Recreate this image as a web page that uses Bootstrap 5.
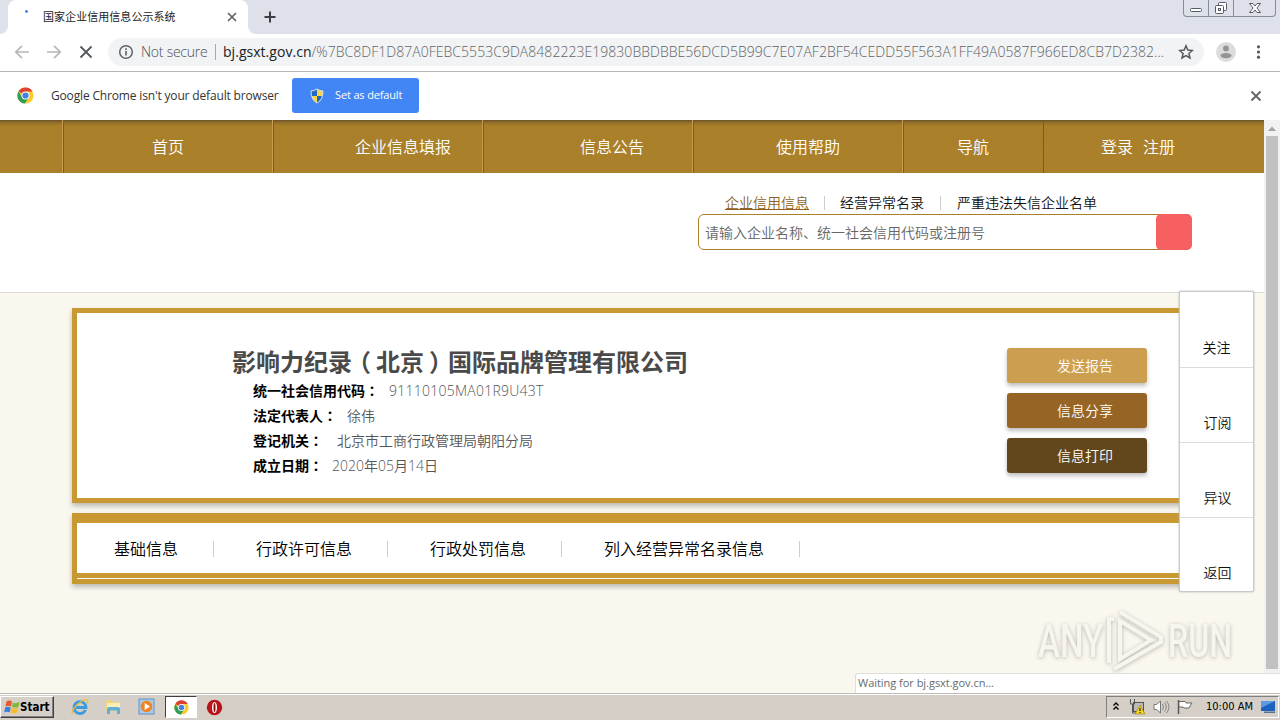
<!DOCTYPE html>
<html lang="zh-CN">
<head>
  <meta charset="UTF-8">
  <meta name="viewport" content="width=device-width, initial-scale=1.0">
  <title>国家企业信用信息公示系统</title>
  <link href="https://cdn.jsdelivr.net/npm/bootstrap@5.3.0/dist/css/bootstrap.min.css" rel="stylesheet">
  <style>
    body {
      width: 1280px;
      height: 720px;
      overflow: hidden;
      font-family: "Open Sans", "Noto Sans CJK SC", sans-serif;
      font-size: 14px;
      font-weight: 350;
      line-height: 20px;
      color: #111;
      background-color: #fff;
    }
    svg { display: block; flex-shrink: 0; }
    .fit { white-space: nowrap; }

    /* Browser chrome */
    .tab-strip { height: 34px; background-color: #dee1e9; }
    .tab-lead { width: 8px; height: 34px; background-color: #fff; }
    .tab-lead div { height: 100%; background-color: #dee1e9; border-bottom-right-radius: 8px; }
    .tab-tail { width: 8px; height: 34px; background-color: #fff; }
    .tab-tail div { height: 100%; background-color: #dee1e9; border-bottom-left-radius: 8px; }
    .browser-tab { width: 240px; background-color: #fff; border-radius: 8px 8px 0 0; padding: 0 10px 0 16px; }
    .tab-title { font-size: 11px; font-weight: 400; letter-spacing: .05px; color: #222; margin-left: 14px; }
    .window-btns { width: 93px; height: 17px; margin-right: 4px; border: 1px solid #868c98; border-top: 0; border-radius: 0 0 4px 4px; }
    .window-btns div { border-right: 1px solid #868c98; display: flex; align-items: center; justify-content: center; }
    .window-btns div:last-child { border-right: 0; }
    .toolbar { height: 38px; border-bottom: 1px solid #b6b6b8; padding: 3px 14px 5px 14px; }
    .omnibox { width: 1096px; height: 28px; border-radius: 14px; background-color: #f1f3f4; padding: 0 10px 0 10px; margin-left: 14px; color: #5f6368; font-size: 14px; font-weight: 300; }
    .omnibox .divider { width: 1px; height: 16px; background-color: #a5a8ac; margin: 0 7px 0 8px; }
    .omnibox .host { color: #202124; font-weight: 400; }
    .omnibox .secure { letter-spacing: -.25px; color: #4c5055; }
    .omnibox .url { width: 941px; letter-spacing: .035px; }
    .infobar { height: 48px; padding: 0 18px 1px 17px; }
    .infobar-text { width: 228px; font-size: 12px; font-weight: 400; letter-spacing: -.16px; margin-left: 17px; color: #333; }
    .btn-default-browser { width: 127px; height: 35px; margin-left: 13px; padding: 0 0 0 16px; border-radius: 3px; background-color: #4285f4; color: #fff; font-size: 11px; letter-spacing: -.15px; }

    /* Page */
    .viewport { height: 573px; background-color: #faf7ef; }
    .page { width: 1264px; }
    .site-nav { height: 53px; background: linear-gradient(#67512a 0, #8d6b2a 2px, #a98029 6px, #ab802b 100%); color: #fff; font-size: 16px; }
    .site-nav div { border-right: 1px solid #c89d50; box-shadow: inset 1px 0 #7c5b1b; padding-top: 1px; display: flex; align-items: center; }
    .site-nav div:first-child { box-shadow: none; }
    .site-nav div:nth-child(6) { border-right-color: #7c5b1b; }
    .site-nav div:last-child { border-right: 0; box-shadow: none; }
    .search-area { height: 120px; background-color: #fff; border-bottom: 1px solid #dddbd9; padding: 20px 72px 0 698px; }
    .search-tabs { height: 21px; padding: 0 0 2px 27px; }
    .search-tabs a { color: #8f5f20; }
    .search-tabs i { width: 1px; height: 14px; margin: 0 15px; background-color: #ccc; }
    .search-tabs i + span + i { margin: 0 16px; }
    .search-box { height: 36px; border: 1px solid #a98029; border-radius: 6px; padding-left: 6px; color: #666; }
    .search-box span { padding-top: 2px; }
    .search-submit { width: 36px; height: 36px; margin-right: -1px; border-radius: 5px; background-color: #f66061; }
    .gold-card { width: 1120px; margin-left: 72px; border: 5px solid #c89933; background-color: #fff; box-shadow: 0 3px 5px rgba(0, 0, 0, .25); }
    .company { height: 195px; margin-top: 15px; padding: 35px 40px 0 155px; }
    .company h1 { height: 26px; font-size: 24px; line-height: 28px; font-weight: 700; color: #4a4a4a; margin-bottom: 4px; white-space: nowrap; }
    .company dl { margin: 0; padding-left: 21px; }
    .company dl div { height: 25px; display: flex; align-items: center; white-space: nowrap; }
    .company dt { height: 20px; color: #000; font-weight: 700; }
    .company dd { height: 20px; color: #555; margin: 0; }
    /* Punctuation centred in its full-width cell */
    .mid { font-family: "Noto Sans CJK TC", sans-serif; line-height: 1; }
    .mid.open { margin: 0 5px 0 -5px; }
    .mid.close { margin: 0 -5px 0 5px; }
    .action-btn { width: 140px; height: 35px; border-radius: 3px; padding: 0 0 0 16px; color: #fff; font-size: 14px; font-weight: 350; box-shadow: 0 3px 4px rgba(0, 0, 0, .25); }
    .send { background-color: #cc9e4f; }
    .share { background-color: #966526; }
    .print { background-color: #61471b; }
    .info-tabs { height: 71px; margin-top: 10px; }
    .info-tabs nav { height: 60px; border-top: 5px solid #c89933; border-bottom: 5px solid #c89933; font-size: 16px; color: #000; padding: 2px 0 0 37px; }
    .info-tabs i { width: 1px; height: 16px; margin: 0 42px 0 35px; background-color: #ccc; }

    /* Side panel floats over the cards */
    .side-panel { position: absolute; left: 1179px; top: 291px; width: 75px; height: 301px; background-color: #fff; border: 1px solid #c9c9cd; border-radius: 2px; box-shadow: 0 0 2px #aaa; }
    .side-panel div { height: 75px; padding-top: 46px; text-align: center; border-bottom: 1px solid #dcdcdc; }
    .side-panel div:first-child { height: 76px; }
    .side-panel div + div { padding: 45px 0 0 2px; }
    .side-panel div:last-child { height: 73px; border-bottom: 0; }
    .scroll-track { width: 16px; height: 553px; background-color: #f1f1f1; }
    .scroll-thumb { width: 12px; height: 533px; margin: 0 auto; background-color: #c1c1c1; }
    .watermark { position: absolute; left: 1030px; top: 603px; }
    .status-bubble { position: absolute; left: 855px; top: 673px; width: 425px; height: 20px; padding-left: 2px; background-color: #fff; border: 1px solid #dedede; border-right: 0; border-bottom: 0; border-top-left-radius: 3px; font-size: 11px; font-weight: 400; line-height: 18px; letter-spacing: -.03px; color: #666b70; }

    /* Taskbar */
    .taskbar { height: 27px; background-color: #d5cfc7; border-top: 1px solid #c0bdb8; box-shadow: inset 0 1px #fff; font-family: "DejaVu Sans Condensed", "DejaVu Sans", sans-serif; font-size: 11px; font-weight: 400; color: #000; }
    .start-btn { width: 54px; height: 22px; padding: 0 0 0 3px; border: 1px solid; border-color: #fff #404040 #404040 #fff; box-shadow: inset -1px -1px #808080; font-size: 11.5px; font-weight: 700; }
    .task-active { width: 32px; height: 22px; background-color: #fff; border: 1px solid; border-color: #404040 #fff #fff #404040; }
    .tray { width: 173px; height: 22px; border: 1px solid; border-color: #808080 #fff #fff #808080; padding-left: 5px; }
  </style>
</head>
<body>

  <svg width="0" height="0" class="position-absolute">
    <symbol id="chrome" viewBox="0 0 18 18">
      <circle cx="9" cy="9" r="8.5" fill="#fbcb2d"/>
      <path d="M9 9 1.6 4.7A8.5 8.5 0 0 1 16.4 4.8H9z" fill="#dd4132"/>
      <path d="M1.6 4.7A8.5 8.5 0 0 0 8.2 17.5L12.5 11 9 9 5.6 11z" fill="#2c9e55"/>
      <circle cx="9" cy="9" r="4.2" fill="#fff"/>
      <circle cx="9" cy="9" r="3.3" fill="#4380e0"/>
    </symbol>
  </svg>

  <!-- Tab strip -->
  <div class="tab-strip d-flex">
    <div class="tab-lead"><div></div></div>
    <div class="browser-tab d-flex align-items-center">
      <svg width="14" height="20"><circle cx="2.5" cy="4.5" r="1.4" fill="#3f7de0"/></svg>
      <span class="tab-title fit ms-1" style="padding-left: 1px">国家企业信用信息公示系统</span>
      <svg class="ms-auto" width="12" height="12" viewBox="0 0 12 12"><path d="M2 2l8 8M10 2l-8 8" stroke="#5f6368" stroke-width="1.7"/></svg>
    </div>
    <div class="tab-tail"><div></div></div>
    <svg class="mt-2" style="margin-left: 6px" width="16" height="18" viewBox="0 0 16 18"><path d="M8 3.5v11M2.500 9h11" stroke="#3c4043" stroke-width="2"/></svg>
    <div class="window-btns d-flex ms-auto">
      <div style="width: 25px"><svg width="14" height="16"><rect x="1.5" y="8.5" width="11" height="3" rx="1" fill="#fff" stroke="#555b66"/></svg></div>
      <div style="width: 25px"><svg width="14" height="16" fill="#fff" stroke="#555b66"><rect x="4.5" y="2.5" width="8" height="8" rx="1"/><rect x="1.5" y="5.5" width="8" height="8" rx="1"/><rect x="4.5" y="8.5" width="2" height="2"/></svg></div>
      <div class="flex-fill"><svg width="14" height="16"><path d="M1.5 3.5H5l2 2.500 2-2.500h3.500L9 8l3.500 4.500H9L7 10l-2 2.500H1.500L5 8z" fill="#fff" stroke="#555b66"/></svg></div>
    </div>
  </div>

  <!-- Toolbar -->
  <div class="toolbar d-flex align-items-center">
    <svg width="16" height="16" viewBox="0 0 16 16" fill="none" stroke="#b5b7b9" stroke-width="1.7"><path d="M15 8H2M8 1.8 1.8 8 8 14.2"/></svg>
    <svg style="margin-left: 16px" width="16" height="16" viewBox="0 0 16 16" fill="none" stroke="#b5b7b9" stroke-width="1.7"><path d="M1 8h13M8 1.8 14.2 8 8 14.2"/></svg>
    <svg style="margin-left: 16px" width="16" height="16" viewBox="0 0 16 16"><path d="M2.5 2.5l11 11M13.5 2.5l-11 11" stroke="#55585c" stroke-width="1.8"/></svg>
    <div class="omnibox d-flex align-items-center">
      <svg width="16" height="16" viewBox="0 0 16 16"><circle cx="8" cy="8" r="6.3" fill="none" stroke="#5f6368" stroke-width="1.5"/><path d="M8 7v4.500M8 4.300v1.600" stroke="#5f6368" stroke-width="1.6"/></svg>
      <span class="secure fit" style="width: 66px; margin-left: 7px">Not secure</span>
      <span class="divider"></span>
      <span class="url fit"><span class="host">bj.gsxt.gov.cn</span>/%7BC8DF1D87A0FEBC5553C9DA8482223E19830BBDBBE56DCD5B99C7E07AF2BF54CEDD55F563A1FF49A0587F966ED8CB7D2382...</span>
      <svg class="ms-auto" width="16" height="16" viewBox="0 0 16 16"><path d="M8 1.8l1.800 4.300 4.600.4-3.500 3 1.100 4.500L8 11.600 4 14l1.100-4.500-3.500-3 4.600-.4z" fill="none" stroke="#55585c" stroke-width="1.5"/></svg>
    </div>
    <svg style="margin-left: 12px" width="20" height="20" viewBox="0 0 20 20"><circle cx="10" cy="10" r="10" fill="#dcdcdd"/><circle cx="10" cy="6.5" r="2.9" fill="#929497"/><ellipse cx="10" cy="13.6" rx="5.5" ry="2.7" fill="#929497"/></svg>
    <svg style="margin-left: 20px" width="5" height="16" fill="#55585c"><circle cx="2.5" cy="2.8" r="1.6"/><circle cx="2.5" cy="8" r="1.6"/><circle cx="2.5" cy="13.2" r="1.6"/></svg>
  </div>

  <!-- Default browser bar -->
  <div class="infobar d-flex align-items-center">
    <svg width="17" height="17"><use href="#chrome"/></svg>
    <span class="infobar-text fit">Google Chrome isn't your default browser</span>
    <button type="button" class="btn btn-default-browser d-flex align-items-center">
      <svg width="16" height="16" viewBox="0 0 16 16"><path d="M8 1Q5 3 2 3q0 9 6 12 6-3 6-12-3 0-6-2z" fill="#f8d648"/><path d="M8 1Q5 3 2 3q0 3 .7 5H8zM8 8h5.300Q12 13 8 15z" fill="#2369c4"/><path d="M8 1Q5 3 2 3q0 9 6 12 6-3 6-12-3 0-6-2z" fill="none" stroke="#d6dfe9"/></svg>
      <span class="fit" style="margin-left: 10px">Set as default</span>
    </button>
    <svg class="ms-auto" width="12" height="12" viewBox="0 0 12 12"><path d="M1.5 1.5l9 9M10.5 1.5l-9 9" stroke="#5f6368" stroke-width="1.8"/></svg>
  </div>

  <!-- Page viewport -->
  <div class="viewport d-flex">
    <div class="page">
      <div class="site-nav d-flex">
        <div style="width: 63px"></div>
        <div style="width: 210px; padding-left: 89px">首页</div>
        <div style="width: 210px; padding-left: 82px">企业信息填报</div>
        <div style="width: 210px; padding-left: 97px">信息公告</div>
        <div style="width: 210px; padding-left: 83px">使用帮助</div>
        <div style="width: 141px; padding-left: 54px">导航</div>
        <div class="flex-fill" style="padding-left: 57px"><span>登录</span><span style="margin-left: 10px">注册</span></div>
      </div>

      <div class="search-area">
        <div class="search-tabs d-flex align-items-center">
          <a href="#">企业信用信息</a><i></i><span>经营异常名录</span><i></i><span>严重违法失信企业名单</span>
        </div>
        <div class="search-box d-flex align-items-center justify-content-between">
          <span>请输入企业名称、统一社会信用代码或注册号</span>
          <div class="search-submit"></div>
        </div>
      </div>

      <div class="gold-card company d-flex justify-content-between">
        <div>
          <h1>影响力纪录<span class="mid open" lang="zh-TW">（</span>北京<span class="mid close" lang="zh-TW">）</span>国际品牌管理有限公司</h1>
          <dl>
            <div><dt>统一社会信用代码<span class="mid" lang="zh-TW">：</span></dt><dd style="margin-left: 10px; letter-spacing: .25px">91110105MA01R9U43T</dd></div>
            <div><dt>法定代表人<span class="mid" lang="zh-TW">：</span></dt><dd style="margin-left: 10px">徐伟</dd></div>
            <div><dt>登记机关<span class="mid" lang="zh-TW">：</span></dt><dd style="margin-left: 14px">北京市工商行政管理局朝阳分局</dd></div>
            <div><dt>成立日期<span class="mid" lang="zh-TW">：</span></dt><dd style="margin-left: 9px">2020年05月14日</dd></div>
          </dl>
        </div>
        <div class="d-flex flex-column" style="gap: 10px">
          <button type="button" class="btn action-btn send">发送报告</button>
          <button type="button" class="btn action-btn share">信息分享</button>
          <button type="button" class="btn action-btn print">信息打印</button>
        </div>
      </div>

      <div class="gold-card info-tabs">
        <nav class="d-flex align-items-center">
          <span>基础信息</span><i></i><span>行政许可信息</span><i></i><span>行政处罚信息</span><i></i><span>列入经营异常名录信息</span><i></i>
        </nav>
      </div>
    </div>

    <div class="scroll-track">
      <svg width="16" height="16"><path d="M4 11l4-4.500 4 4.500z" fill="#a3a3a3"/></svg>
      <div class="scroll-thumb"></div>
    </div>
  </div>

  <!-- Taskbar -->
  <div class="taskbar d-flex align-items-center">
    <div class="start-btn d-flex align-items-center">
      <svg width="16" height="16" viewBox="0 0 16 16"><path d="M2.500 2.500q3-2.200 5.500 0L7 7.500q-2.500-1.700-5.500 0z" fill="#e8582a"/><path d="M9 3.500q2.500 1.500 6.500-.5L14.500 7.700q-3 1.800-6.500 0z" fill="#7cb93c"/><path d="M1.200 8.500q2.500-1.700 5.500 0l-1 5q-2.500-1.700-5.500 0z" fill="#3b7fd6"/><path d="M7.700 8.800q3 1.600 6.500-.2l-1 5q-3 1.800-6.500.2z" fill="#f6bd29"/></svg>
      <span>Start</span>
    </div>
    <svg style="margin-left: 17px" width="18" height="18" viewBox="0 0 18 18" fill="none"><path d="M14.500 12A6 6 0 1 1 15 9.500H4" stroke="#3d9be0" stroke-width="2.8"/><path d="M1.500 16C-1 12 12 0 16.500 2c1 .8.500 2-.5 3.500" stroke="#e9bd3b" stroke-width="1.3"/></svg>
    <svg style="margin-left: 16px" width="17" height="18" viewBox="0 0 17 18"><path d="M1 2h5l1 2h8v9H1z" fill="#efd57c"/><path d="M2 5h13v5H2z" fill="#f9eeb5"/><path d="M2 16V11q0-2 2-2h9q2 0 2 2v5h-3v-3.500H5V16z" fill="#61afd8"/></svg>
    <svg style="margin-left: 16px" width="17" height="18" viewBox="0 0 17 18"><rect x="1" y="1" width="15" height="15" fill="#a9c9e8" stroke="#5c94c8"/><circle cx="8.5" cy="8.5" r="5.8" fill="#ef8522"/><path d="M6.7 5v7l5.300-3.500z" fill="#fff"/></svg>
    <div class="task-active d-flex align-items-center justify-content-center" style="margin-left: 10px"><svg width="15" height="15"><use href="#chrome"/></svg></div>
    <svg style="margin-left: 9px" width="17" height="17" viewBox="0 0 17 17"><circle cx="8.5" cy="8.5" r="7.7" fill="#b91519"/><ellipse cx="8.5" cy="8.5" rx="2.5" ry="5.5" fill="#fff"/><ellipse cx="8.5" cy="8.5" rx="1" ry="4.5" fill="#8d0d10"/></svg>
    <div class="tray d-flex align-items-center ms-auto" style="margin-right: 1px">
      <svg width="8" height="14" viewBox="0 0 8 14" fill="none" stroke="#000" stroke-width="1.3"><path d="M1.5 5.500 4 3l2.500 2.500M1.500 9.500 4 7l2.500 2.500"/></svg>
      <svg style="margin-left: 9px" width="17" height="18" viewBox="0 0 17 18"><rect x="4.5" y="4.5" width="10" height="9" fill="#bbb" stroke="#555"/><path d="M1.5 1v5h4V1M3.500 6v9h4" fill="none" stroke="#555"/><path d="M11 7l5 9H6z" fill="#f5d21d" stroke="#9b8112" stroke-width=".6"/><path d="M11 10v3M11 14v1" stroke="#000"/></svg>
      <svg style="margin-left: 7px" width="17" height="18" viewBox="0 0 17 18"><path d="M1 6.5h2.500L7.500 3v12L3.500 11.500H1z" fill="#fff" stroke="#777"/><path d="M9.5 6q2 3 0 6M11.500 4.500q3.500 4.500 0 9M13.500 3q5 6 0 12" fill="none" stroke="#888"/></svg>
      <svg style="margin-left: 6px" width="18" height="18" viewBox="0 0 18 18"><path d="M2.5 2v14" stroke="#555" stroke-width="1.5"/><path d="M3 3.5h6l1 1.500h6q-1.500 2-3 5H8L7 9H3z" fill="#fff" stroke="#666"/></svg>
      <span class="fit" style="margin-left: 12px">10:00 AM</span>
      <svg class="ms-auto" width="17" height="16" viewBox="0 0 17 16"><path d="M0 2h14v10H0z" fill="#1e62bf"/><path d="M0 2h14L0 9z" fill="#5b9ae6"/><path d="M3 12.500h11V14H3z" fill="#58708e"/></svg>
    </div>
  </div>

  <!-- Overlays -->
  <div class="side-panel">
    <div>关注</div>
    <div>订阅</div>
    <div>异议</div>
    <div>返回</div>
  </div>

  <svg class="watermark" width="240" height="72" viewBox="0 0 240 72" style="filter: drop-shadow(0 1px 2px rgba(90, 85, 75, .4))">
    <g font-family="Roboto, sans-serif" font-size="46" font-weight="500" fill="#f7f5f0">
      <text transform="translate(8 54) scale(.72 1)">ANY</text>
      <text transform="translate(138 54) scale(.7 1)">RUN</text>
    </g>
    <g fill="none" stroke="#f7f5f0" stroke-width="4">
      <path d="M79 60V16h5M90 18v38l31-19zM90 9l41 25v5L84 66"/>
    </g>
  </svg>

  <div class="status-bubble"><span class="fit">Waiting for bj.gsxt.gov.cn...</span></div>

  <script src="https://cdn.jsdelivr.net/npm/bootstrap@5.3.0/dist/js/bootstrap.bundle.min.js"></script>
</body>
</html>
